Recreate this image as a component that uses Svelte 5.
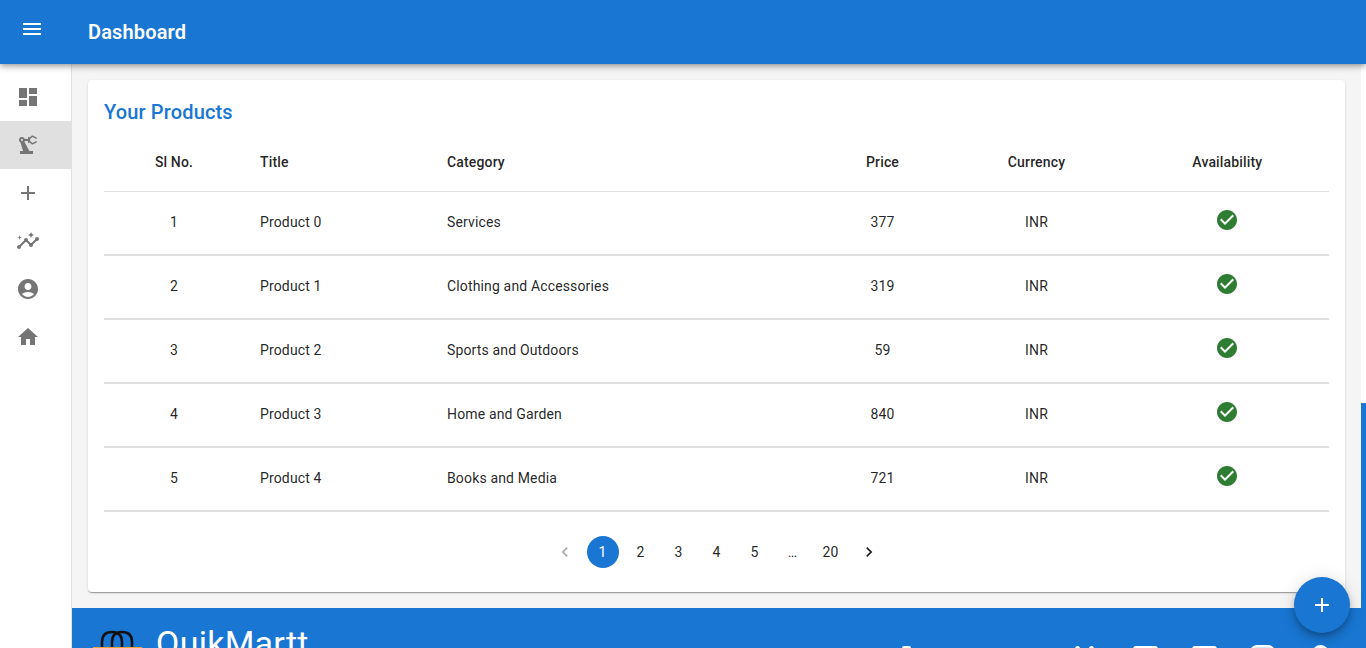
<script>
  const icons = {
    menu: 'M3 18h18v-2H3v2zm0-5h18v-2H3v2zm0-7v2h18V6H3z',
    dashboard: 'M3 13h8V3H3v10zm0 8h8v-6H3v6zm10 0h8V11h-8v10zm0-18v6h8V3h-8z',
    robot: 'M19.93 8.21l-3.6 1.68L14 7.7V6.3l2.33-2.19 3.6 1.68c.38.18.82.01 1-.36.18-.38.01-.82-.36-1L16.65 2.6c-.38-.18-.83-.1-1.13.2l-1.74 1.6c-.18-.24-.46-.4-.78-.4-.55 0-1 .45-1 1v1H8.82C8.34 4.65 6.98 3.73 5.4 4.07c-1.16.25-2.15 1.25-2.36 2.43-.22 1.32.46 2.47 1.48 3.08L7.08 18H4v3h13v-3h-3.62L8.41 8.77c.17-.24.31-.49.41-.77H12v1c0 .55.45 1 1 1 .32 0 .6-.16.78-.4l1.74 1.6c.3.3.75.38 1.13.2l3.92-1.83c.38-.18.54-.62.36-1-.18-.37-.62-.54-1-.36zM6 8c-.55 0-1-.45-1-1s.45-1 1-1 1 .45 1 1-.45 1-1 1z',
    add: 'M19 13h-6v6h-2v-6H5v-2h6V5h2v6h6v2z',
    insights: 'M21 8c-1.45 0-2.26 1.44-1.93 2.51l-3.55 3.56c-.3-.09-.74-.09-1.04 0l-2.55-2.55C12.27 10.45 11.46 9 10 9c-1.45 0-2.27 1.44-1.93 2.52l-4.56 4.55C2.44 15.74 1 16.55 1 18c0 1.1.9 2 2 2 1.45 0 2.26-1.44 1.93-2.51l4.55-4.56c.3.09.74.09 1.04 0l2.55 2.55C12.73 16.55 13.54 18 15 18c1.45 0 2.27-1.44 1.93-2.52l3.56-3.55c1.07.33 2.51-.48 2.51-1.93 0-1.1-.9-2-2-2zM15 9l.94-2.07L18 6l-2.06-.93L15 3l-.92 2.07L12 6l2.08.93zM3.5 11L4 9l2-.5L4 8l-.5-2L3 8l-2 .5L3 9z',
    account: 'M12 2C6.48 2 2 6.48 2 12s4.48 10 10 10 10-4.48 10-10S17.52 2 12 2zm0 4c1.93 0 3.5 1.57 3.5 3.5S13.93 13 12 13s-3.5-1.57-3.5-3.5S10.07 6 12 6zm0 14c-2.03 0-4.43-.82-6.14-2.88C7.55 15.8 9.68 15 12 15s4.45.8 6.14 2.12C16.43 19.18 14.03 20 12 20z',
    home: 'M10 20v-6h4v6h5v-8h3L12 3 2 12h3v8z',
    check: 'M12 2C6.48 2 2 6.48 2 12s4.48 10 10 10 10-4.48 10-10S17.52 2 12 2zm-2 15l-5-5 1.41-1.41L10 14.17l7.59-7.59L19 8l-9 9z',
    prev: 'M15.41 7.41 14 6l-6 6 6 6 1.41-1.41L10.83 12z',
    next: 'M10 6 8.59 7.41 13.17 12l-4.58 4.59L10 18l6-6z'
  };

  const nav = ['dashboard', 'robot', 'add', 'insights', 'account', 'home'];
  const products = [
    { title: 'Product 0', category: 'Services', price: 377 },
    { title: 'Product 1', category: 'Clothing and Accessories', price: 319 },
    { title: 'Product 2', category: 'Sports and Outdoors', price: 59 },
    { title: 'Product 3', category: 'Home and Garden', price: 840 },
    { title: 'Product 4', category: 'Books and Media', price: 721 }
  ];
  const pages = ['1', '2', '3', '4', '5', '…', '20'];
</script>

<div class="shell">
  <header class="appbar">
    <span class="menu-btn">
      <svg viewBox="0 0 24 24" width="24" height="24"><path d={icons.menu} /></svg>
    </span>
    <h1>Dashboard</h1>
  </header>

  <div class="body">
    <nav class="sidebar">
      {#each nav as name}
        <div class="nav-item" class:selected={name === 'robot'}>
          <svg viewBox="0 0 24 24" width="24" height="24"><path d={icons[name]} /></svg>
        </div>
      {/each}
    </nav>

    <div class="content">
      <main>
        <section class="card">
          <h2>Your Products</h2>
          <table>
            <colgroup>
              <col style="width: 140px" />
              <col style="width: 187px" />
              <col style="width: 386.5px" />
              <col style="width: 130px" />
              <col style="width: 178px" />
              <col style="width: 203.5px" />
            </colgroup>
            <thead>
              <tr>
                <th class="center">Sl No.</th>
                <th>Title</th>
                <th>Category</th>
                <th class="center">Price</th>
                <th class="center">Currency</th>
                <th class="center">Availability</th>
              </tr>
            </thead>
            <tbody>
              {#each products as p, i}
                <tr>
                  <td class="center">{i + 1}</td>
                  <td>{p.title}</td>
                  <td>{p.category}</td>
                  <td class="center">{p.price}</td>
                  <td class="center">INR</td>
                  <td class="center">
                    <svg class="ok" viewBox="0 0 24 24" width="24" height="24"><path d={icons.check} /></svg>
                  </td>
                </tr>
              {/each}
            </tbody>
          </table>

          <div class="pager">
            <span class="page disabled">
              <svg viewBox="0 0 24 24" width="20" height="20"><path d={icons.prev} /></svg>
            </span>
            {#each pages as pg, i}
              <span class="page" class:current={i === 0}>{pg}</span>
            {/each}
            <span class="page">
              <svg viewBox="0 0 24 24" width="20" height="20"><path d={icons.next} /></svg>
            </span>
          </div>
        </section>
      </main>

      <footer>
        <div class="brand">
          <svg class="logo" viewBox="0 0 52 30" width="52" height="30">
            <path d="M10 18V12C10 5 14 2 20 2s10 3 10 10v6" />
            <path d="M20 18V12C20 5 24 2 30 2s10 3 10 10v6" />
            <rect class="bag" x="1" y="17" width="49" height="13" />
          </svg>
          <span class="name">QuikMartt</span>
        </div>
        <div class="social">
          <span class="contact"></span>
          <span class="tw"><i></i><i></i></span>
          <span class="soc first"></span>
          <span class="soc"></span>
          <span class="soc insta"></span>
          <span class="soc circle"></span>
        </div>
      </footer>
    </div>

    <div class="rail"><div class="rail-top"></div><div class="rail-bottom"></div></div>
  </div>

  <button class="fab" aria-label="Add">
    <svg viewBox="0 0 24 24" width="24" height="24"><path d={icons.add} /></svg>
  </button>
</div>

<style>
  :global(body) {
    margin: 0;
    font-family: Roboto, "Liberation Sans", sans-serif;
    font-size: 14px;
    letter-spacing: 0.01071em;
    color: rgba(0, 0, 0, 0.87);
  }
  .shell {
    position: relative;
    height: 648px;
    overflow: hidden;
    display: flex;
    flex-direction: column;
    background: #fff;
  }
  .appbar {
    position: relative;
    z-index: 2;
    flex: none;
    height: 64px;
    display: flex;
    align-items: center;
    background: #1976d2;
    color: #fff;
    box-shadow: 0 2px 4px -1px rgba(0,0,0,.2), 0 4px 5px 0 rgba(0,0,0,.14), 0 1px 10px 0 rgba(0,0,0,.12);
  }
  .menu-btn {
    width: 88px;
    display: flex;
    padding: 0 0 6px 20px;
    box-sizing: border-box;
  }
  .menu-btn svg { fill: #fff; }
  h1 {
    margin: 0;
    font-size: 20px;
    font-weight: 600;
    line-height: 32px;
    letter-spacing: 0.0075em;
  }
  .body {
    flex: 1;
    min-height: 0;
    display: flex;
  }
  .sidebar {
    flex: none;
    width: 71px;
    padding-top: 9px;
    border-right: 1px solid #e0e0e0;
    background: #fff;
  }
  .nav-item {
    height: 48px;
    display: flex;
    align-items: center;
    padding-left: 16px;
  }
  .nav-item svg { fill: #757575; }
  .nav-item.selected { background: #e0e0e0; }
  .content {
    flex: 1;
    min-width: 0;
    display: flex;
    flex-direction: column;
  }
  main {
    flex: none;
    padding: 16px;
    background: #f5f5f5;
  }
  .card {
    height: 512px;
    box-sizing: border-box;
    padding: 16px;
    background: #fff;
    border-radius: 4px;
    box-shadow: 0 2px 1px -1px rgba(0,0,0,.2), 0 1px 1px 0 rgba(0,0,0,.14), 0 1px 3px 0 rgba(0,0,0,.12);
  }
  h2 {
    margin: 0 0 7px;
    font-size: 20px;
    font-weight: 500;
    line-height: 32px;
    letter-spacing: 0.0075em;
    color: #1976d2;
  }
  table {
    width: 1225px;
    table-layout: fixed;
    border-collapse: separate;
    border-spacing: 0;
  }
  th, td {
    box-sizing: border-box;
    padding: 0 16px 2px;
    text-align: left;
    line-height: 24px;
  }
  th {
    height: 57px;
    font-weight: 500;
    border-bottom: 1px solid #e0e0e0;
  }
  td {
    height: 64px;
    border-bottom: 2px solid #e0e0e0;
  }
  .center { text-align: center; }
  .ok {
    fill: #2e7d32;
    display: inline-block;
    vertical-align: middle;
    margin: -4px 0 2px;
  }
  .pager {
    display: flex;
    justify-content: center;
    gap: 6px;
    margin-top: 24px;
  }
  .page {
    width: 32px;
    height: 32px;
    display: flex;
    align-items: center;
    justify-content: center;
    border-radius: 50%;
    line-height: 1;
  }
  .page svg { fill: rgba(0, 0, 0, 0.87); }
  .page.disabled svg { opacity: 0.38; }
  .page.current {
    background: #1976d2;
    color: #fff;
  }
  footer {
    flex: 1;
    display: flex;
    justify-content: space-between;
    background: #1976d2;
    color: #fff;
    padding: 22px 32px 0 20px;
    min-height: 0;
  }
  .brand {
    display: flex;
    align-items: flex-start;
    gap: 12px;
  }
  .logo { flex: none; }
  .logo path {
    fill: none;
    stroke: #111;
    stroke-width: 2.5;
  }
  .logo .bag { fill: #e8a33d; }
  .name {
    font-size: 34px;
    line-height: 40px;
    letter-spacing: 0.00735em;
    margin-top: -7px;
    white-space: nowrap;
  }
  .social {
    display: flex;
    align-items: flex-start;
    padding-top: 16px;
  }
  .contact {
    width: 9px;
    height: 9px;
    border-radius: 2px;
    background: #fff;
    margin-right: 164px;
  }
  .tw {
    width: 19px;
    display: flex;
    justify-content: space-between;
    margin-right: 39px;
  }
  .tw i {
    width: 5px;
    height: 6px;
    border-radius: 50% 50% 0 0;
    background: #fff;
  }
  .soc {
    width: 25px;
    height: 25px;
    box-sizing: border-box;
    border-radius: 3px;
    background: #fff;
    margin-right: 33px;
  }
  .soc.first { margin-right: 34px; }
  .soc.insta {
    margin-top: -1px;
    margin-right: 37px;
    border: 2px solid #fff;
    border-radius: 7px;
    background: #d6e4f6;
  }
  .soc.circle {
    width: 17px;
    height: 17px;
    margin-top: -1px;
    margin-right: 0;
    border-radius: 50%;
  }
  .rail {
    flex: none;
    width: 5px;
    display: flex;
    flex-direction: column;
  }
  .rail-top { height: 339px; background: #fff; }
  .rail-bottom { flex: 1; background: #1976d2; }
  .fab {
    position: absolute;
    right: 16px;
    top: 577px;
    width: 56px;
    height: 56px;
    padding: 0;
    border: none;
    border-radius: 50%;
    display: flex;
    align-items: center;
    justify-content: center;
    z-index: 3;
    background: #1976d2;
    box-shadow: 0 3px 5px -1px rgba(0,0,0,.2), 0 6px 10px 0 rgba(0,0,0,.14), 0 1px 18px 0 rgba(0,0,0,.12);
  }
  .fab svg { fill: #fff; }
</style>
